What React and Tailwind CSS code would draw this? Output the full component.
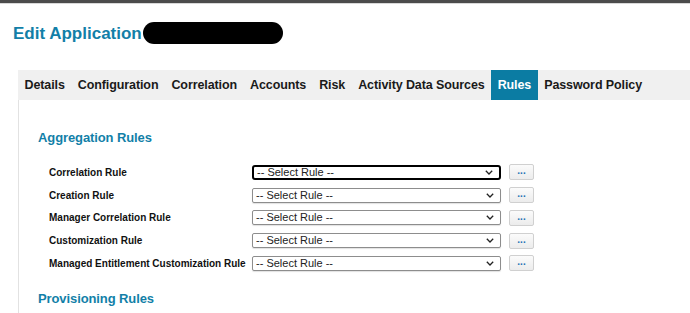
import React from 'react';

const tabs = ['Details', 'Configuration', 'Correlation', 'Accounts', 'Risk', 'Activity Data Sources', 'Rules', 'Password Policy'];

const aggregationRules = [
  'Correlation Rule',
  'Creation Rule',
  'Manager Correlation Rule',
  'Customization Rule',
  'Managed Entitlement Customization Rule',
];

// looks like a native select, drawn by hand so the size is exact
function RuleSelect({ focused }) {
  return (
    <div
      className={
        'w-[249px] h-[15px] box-border bg-white flex items-center justify-between pl-[3px] pr-[6px] ' +
        (focused ? 'border-2 border-black rounded-[3px]' : 'border border-[#8d8d8d] rounded-[2px] shadow-[0_1px_1px_rgba(0,0,0,0.12)]')
      }
    >
      <span className="text-[11px] leading-none text-[#222] whitespace-nowrap">-- Select Rule --</span>
      <svg width="8" height="5" viewBox="0 0 8 5">
        <path d="M0.8 0.8 L4 4 L7.2 0.8" fill="none" stroke="#222" strokeWidth="1.3" />
      </svg>
    </div>
  );
}

function RuleRow({ label, focused }) {
  return (
    <div className="flex items-center h-[22.75px] pl-[11px]">
      <div className="w-[203px] text-[10px] font-bold text-[#111] whitespace-nowrap">{label}</div>
      <RuleSelect focused={focused} />
      <button className="ml-[8px] w-[25px] h-[16px] border border-[#d0d0d0] rounded-[2px] bg-gradient-to-b from-[#fbfbfb] to-[#ececec] text-[10px] font-bold leading-none text-[#1f74b5] flex items-end justify-center pb-[3px]">
        ...
      </button>
    </div>
  );
}

export default function App() {
  return (
    <div className="w-[690px] h-[313px] overflow-hidden bg-white font-['Liberation_Sans',Arial,sans-serif]">
      <div className="h-[3px] bg-[#4b4b4b]" />
      <div className="h-px bg-[#d8d8d8]" />

      <div className="flex items-center pl-[13px] mt-[17px] h-[24px]">
        <h1 className="text-[17px] font-bold text-[#127fa8] leading-none">Edit Application</h1>
        <div className="ml-[1px] w-[140px] h-[22px] bg-black rounded-full" />
      </div>

      <div className="ml-[18px] mt-[25px] h-[30px] bg-[#f0f0f0] flex items-stretch">
        {tabs.map(t => (
          <div
            key={t}
            className={
              'flex items-center px-[6.5px] text-[12.5px] font-bold tracking-[-0.1px] whitespace-nowrap ' +
              (t === 'Rules' ? 'bg-[#0b7ca3] text-white' : 'text-[#1a1a1a]')
            }
          >
            {t}
          </div>
        ))}
      </div>

      <div className="ml-[18px] border-l border-[#e2e2e2] pl-[19px] pt-[29px] h-[300px]">
        <h2 className="text-[13px] font-bold text-[#127fa8] leading-[17px] tracking-[-0.1px]">Aggregation Rules</h2>
        <div className="mt-[15px]">
          {aggregationRules.map((r, i) => (
            <RuleRow key={r} label={r} focused={i === 0} />
          ))}
        </div>
        <h2 className="mt-[15px] text-[13px] font-bold text-[#127fa8] leading-[17px] tracking-[-0.1px]">Provisioning Rules</h2>
      </div>
    </div>
  );
}
